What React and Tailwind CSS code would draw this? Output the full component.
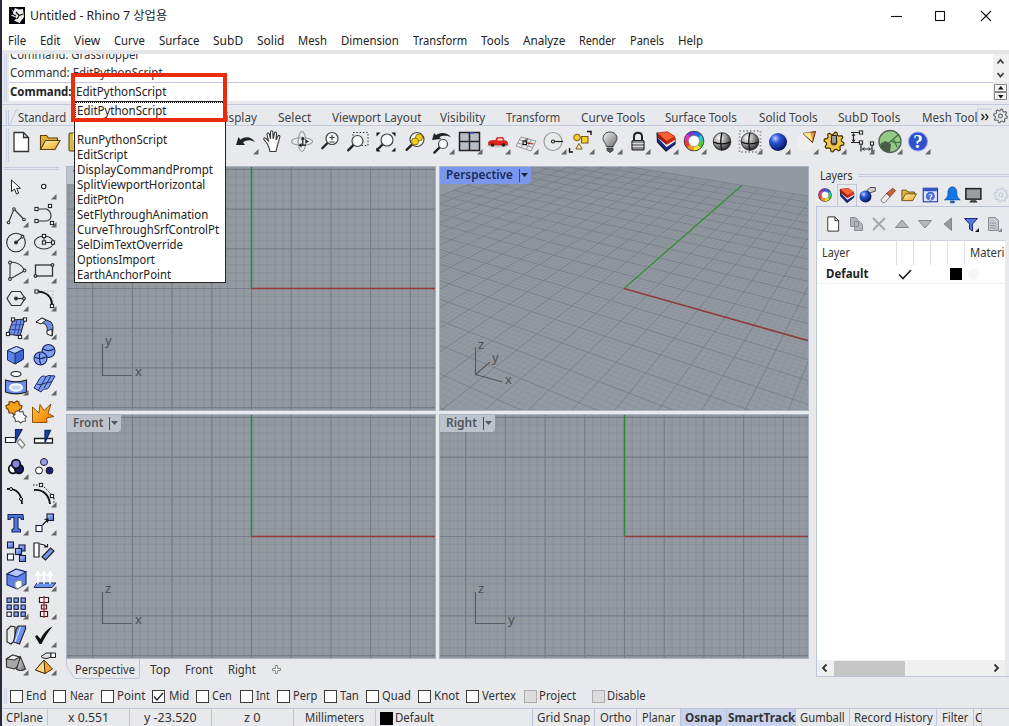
import React, { useLayoutEffect, useRef } from "react";

/* Text condensed horizontally to the width of its box. */
function T({ className = "", children }) {
  const box = useRef(null);
  const ink = useRef(null);
  useLayoutEffect(() => {
    const natural = ink.current.offsetWidth;
    if (natural) ink.current.style.transform = `scaleX(${box.current.offsetWidth / natural})`;
  }, []);
  return (
    <span ref={box} className={`inline-block shrink-0 whitespace-pre ${className}`}>
      <span ref={ink} className="inline-block origin-left">{children}</span>
    </span>
  );
}

const BL = "#6f8fe6";
const K = "#1b1b1b";

const Defs = () => (
  <svg className="absolute h-0 w-0">
    <defs>
      <radialGradient id="chrome" cx="35%" cy="30%" r="75%">
        <stop offset="0" stopColor="#fff" /><stop offset=".5" stopColor="#9a9a9a" /><stop offset="1" stopColor="#222" />
      </radialGradient>
      <radialGradient id="blueball" cx="35%" cy="30%" r="75%">
        <stop offset="0" stopColor="#b9d0ff" /><stop offset=".35" stopColor="#2a55d8" /><stop offset="1" stopColor="#04104f" />
      </radialGradient>
      <linearGradient id="gold" x1="0" y1="0" x2="1" y2="1">
        <stop offset="0" stopColor="#fff3b8" /><stop offset="1" stopColor="#e8a818" />
      </linearGradient>
      <linearGradient id="flame" x1="0" y1="0" x2="1" y2="1">
        <stop offset="0" stopColor="#ffc93a" /><stop offset="1" stopColor="#ee7505" />
      </linearGradient>
      <linearGradient id="blu" x1="0" y1="0" x2="1" y2="1">
        <stop offset="0" stopColor="#c3d3ff" /><stop offset="1" stopColor="#3f64d4" />
      </linearGradient>
      <linearGradient id="grayg" x1="0" y1="0" x2="1" y2="1">
        <stop offset="0" stopColor="#f4f4f4" /><stop offset="1" stopColor="#6a6a6a" />
      </linearGradient>
    </defs>
  </svg>
);

const Dot = ({ x, y }) => <rect x={x - 1.6} y={y - 1.6} width="3.2" height="3.2" fill="#fff" stroke={K} strokeWidth="1" />;
const Page = () => <path d="M7 4.500h9.500l5 5V23.500H7zM16.500 4.500v5h5" fill="#fff" stroke="#333" strokeWidth="1.3" />;
const Folder = () => (
  <g stroke="#5b4208" strokeWidth="1.1">
    <path d="M4.500 21V7.500h6l2 2.500h9V13" fill="#e0b23c" />
    <path d="M4.500 21.500l5-9h14.500l-5 9z" fill="url(#gold)" />
  </g>
);
const Wheel = ({ r = 7.5, w = 4 }) => {
  const cols = ["#27c4c4", "#2b62e0", "#7a35d8", "#e034b4", "#f3372d", "#f59a1c", "#f2e52a", "#52c936"].reverse();
  const c = 2 * Math.PI * r;
  return (
    <g fill="none" strokeWidth={w}>
      <circle cx="14" cy="14" r={r} stroke="#333" strokeWidth={w + 1.6} />
      {cols.map((k, i) => (
        <circle key={k} cx="14" cy="14" r={r} stroke={k} strokeDasharray={`${c / 8 + 0.3} ${c}`} strokeDashoffset={(-c * i) / 8} />
      ))}
      <circle cx="14" cy="14" r={r - w / 2} fill="#fff" stroke="#888" strokeWidth=".5" />
    </g>
  );
};
const LayersIcon = () => (
  <g strokeLinejoin="round">
    <path d="M5 5l9.500 8.500L23 10.500v5.500l-9 7L5.500 14z" fill="#1b2d86" stroke="#161c46" strokeWidth="1.200" />
    <path d="M5.500 9.500l9 9.500 8.500-5.500v-2.500L14.500 16z" fill="#f4f5fb" />
    <path d="M5 5l9.500 8.500v3.500L5.500 9z" fill="#a81a0c" />
    <path d="M14.500 13.500l8.500-5v3.500l-8.500 5z" fill="#d8260f" />
    <path d="M5 5l10.500-1.200L23 8.500l-8.500 5z" fill="#ff6230" stroke="#8c1c0a" strokeWidth=".7" />
  </g>
);
const Lens = ({ x = 16, y = 11, r = 6, fill = "#f7f8fa" }) => (
  <g>
    <path d={`M${x - r * 0.7} ${y + r * 0.7}L${x - r * 0.7 - 5.5} ${y + r * 0.7 + 5.5}`} stroke="#222" strokeWidth="2.300" strokeLinecap="round" />
    <circle cx={x} cy={y} r={r} fill={fill} stroke="#444" strokeWidth="1.200" />
  </g>
);
const Gear = ({ fill = "none", stroke = "#777", r = 6.5, w = 1.1 }) => {
  const pts = [];
  for (let i = 0; i < 32; i++) {
    const rad = i % 4 < 2 ? r * 1.25 : r * 0.95;
    const a = (i / 32) * 2 * Math.PI + 0.1;
    pts.push(`${(14 + rad * Math.cos(a)).toFixed(2)},${(14 + rad * Math.sin(a)).toFixed(2)}`);
  }
  return (
    <g fill={fill} stroke={stroke} strokeWidth={w}>
      <polygon points={pts.join(" ")} />
      <circle cx="14" cy="14" r={r * 0.35} fill="#e7e9ed" />
    </g>
  );
};
const Chrome = () => (
  <g>
    <circle cx="14" cy="13.500" r="8.800" fill="url(#chrome)" stroke="#222" strokeWidth=".8" />
    <path d="M5.500 14c4 2.500 13 2.500 17 0M14 5c-1.500 5-1.500 12 0 17" fill="none" stroke="#111" strokeWidth="1.300" />
  </g>
);

const top = {
  new: <g transform="translate(-1 0)"><Page /></g>,
  open: <Folder />,
  save: <g><rect x="5" y="5" width="18" height="18" rx="1" fill="#d9b84a" stroke="#4a3b0d" /><rect x="9" y="5" width="10" height="7" fill="#fff" /></g>,
  undo: <path d="M4 17l2.500-8 2 2.800c5-4 11-3 14.500 2.200-5-2.500-9-2-12 .5l2 2.500z" fill="#222" />,
  hand: <path d="M8.500 16L5 11.500c-1-1.500 1-2.500 2-1l2.500 2.500L8 6.500c0-2 2-2 2.500 0L11.500 11l0-7c.3-1.600 2-1.600 2.300 0l.4 7 1.300-6c.5-1.500 2.100-1.200 2.100.5L17 12l2-4c.7-1.300 2.200-.5 1.900.8L18.500 17c-.5 3-1 4-1.500 6.500h-6c-.5-3-1.500-5-2.500-7.500z" fill="#fff" stroke="#333" strokeWidth="1.1" transform="translate(-1 0)" />,
  rotate: (
    <g fill="none" stroke="#999" strokeWidth="1.100">
      <ellipse cx="14" cy="13.500" rx="10.500" ry="3.800" /><ellipse cx="14" cy="13.500" rx="3.800" ry="10" />
      <path d="M13 17.200h5M14.800 11v6" stroke="#222" strokeWidth="1.200" />
      <path d="M10.500 17.200l3-2.200v4.400zM21 13.500l-3.500-2v4zM14.800 8.500l-2 3.200h4z" fill="#222" stroke="none" />
    </g>
  ),
  zoom: <g transform="translate(1 0)"><Lens x={15} y={10.500} /><path d="M12.500 9.500h5M15 7v5M12.500 14h5" stroke="#333" strokeWidth="1.100" /></g>,
  zoomwin: <g><path d="M9 4.500h15v13H9z" fill="none" stroke="#333" strokeDasharray="1.5 1.8" /><Lens x={13.500} y={13} r={5.500} /></g>,
  zoomext: <g><Lens x={15} y={12} /><path d="M4.500 8.500v-4h4zM19.500 4.500h4v4zM23.500 19.500v4h-4zM4.500 19.500v4h4z" fill="#111" /></g>,
  zoomsel: <g transform="translate(1 0)"><Lens x={16} y={11.500} r={7} /><circle cx="18" cy="9.500" r="3.500" fill="#f2cf1d" stroke="#8b7100" /><circle cx="14" cy="13.500" r="3.500" fill="#f2cf1d" stroke="#8b7100" /></g>,
  zoomundo: <g><path d="M4 12l2-7 2 2c5-3.500 11-2.500 15 2-5-2-9-1.500-11.500 0l1.500 2z" fill="#222" /><Lens x={15} y={16} r={4.500} /></g>,
  views: <g fill="#b9bdc4" stroke="#222" strokeWidth="1.500"><path d="M3.500 4.500h20v18h-20zM13.500 4.500v18M3.500 13.500h20" /><path d="M14 5h4" stroke="#3a55d0" /></g>,
  car: <g><ellipse cx="14" cy="18" rx="11" ry="1.500" fill="#c5c7cc" /><path d="M4.500 14.500c0-1.500 2-2.300 7-2L13 9.500h6l1.300 3.200c2.200 0 3.200.8 3.200 2V17h-19z" fill="#e4211b" stroke="#b0140f" strokeWidth=".6" /><path d="M14 10.500h4.300l.8 2h-6z" fill="#f9dcd9" /><circle cx="8.500" cy="17" r="1.700" fill="#222" /><circle cx="19.500" cy="17" r="1.700" fill="#222" /></g>,
  cplane: <g fill="none" stroke="#999" strokeWidth="1"><path d="M9 9l15 4-5 10-15-5zM7.500 12l15 4M6 15l15 4.500M14 10l-5 10M19 12l-5 10" /><path d="M14 15v-4M14 15l7 1" stroke="#b02424" /><path d="M14 15l2-5" stroke="#2a8a2a" /><rect x="11" y="13" width="3.500" height="3.500" stroke="#111" /></g>,
  circle: <g fill="none" stroke="#999" strokeWidth="1.200"><circle cx="13" cy="13.500" r="9" /><path d="M13 13.500h10" stroke="#222" /><circle cx="13" cy="13.500" r="1.500" fill="#fff" stroke="#222" /></g>,
  selobj: <g stroke="#7a5a08" strokeWidth="1"><circle cx="9" cy="9.500" r="3.300" fill="#f6cf2c" /><rect x="13.500" y="8.500" width="6.500" height="6.500" fill="#f6cf2c" /><path d="M11 15.500l3.200 5.500H7.800z" fill="#fbe8c8" /><path d="M19 3.500h4v3.500M1.500 20v4h3.500" fill="none" stroke="#111" strokeWidth="1.400" /></g>,
  bulb: <g stroke="#444" strokeWidth="1"><path d="M14 4c-4.500 0-7 3-7 6.500 0 3 3 5 3.500 8h7c.5-3 3.500-5 3.500-8C21 7 18.500 4 14 4z" fill="url(#grayg)" /><path d="M11 20h6v2.500l-3 2-3-2z" fill="#555" /></g>,
  lock: <g><path d="M10 13V8.500c0-5 8-5 8 0V13" fill="none" stroke="#222" strokeWidth="2" /><rect x="8" y="12.500" width="12" height="9.500" rx="1" fill="#8c8c8c" stroke="#222" strokeWidth="1.200" /><path d="M8.500 15.500h11M8.500 18.500h11" stroke="#ddd" /></g>,
  layers: <LayersIcon />,
  wheel: <g transform="translate(0 -1)"><Wheel /></g>,
  shade: <Chrome />,
  shadesel: <g><rect x="3.500" y="3" width="21" height="21" fill="none" stroke="#999" strokeDasharray="1.500 2" strokeWidth="1.800" /><Chrome /></g>,
  render: <circle cx="14" cy="14" r="9" fill="url(#blueball)" />,
  cone: <g><circle cx="13" cy="14" r="9" fill="#efedef" /><path d="M11 5.500l12.500-2-3 11z" fill="#f0922e" stroke="#4a2a0a" strokeWidth="1" /><path d="M11 5.500l7.500-1.200 2 9z" fill="#ffe89a" /></g>,
  gears: <g><Gear fill="#efc64a" stroke="#453207" r={8} w={1.200} /><path d="M11.500 14V7.500h5V14c0 2-5 2-5 0z" fill="#999" stroke="#222" /></g>,
  dims: <g fill="none" stroke="#222" strokeWidth="1.200"><path d="M3 4.500h10M3 14.500h10v9M24 16v8M5.500 6v7M14.500 21h8" /><path d="M4 8l1.500-2.500L7 8M4 11.500L5.500 14 7 11.500M16.500 19.500l-2 1.500 2 1.500M20.500 19.500l2 1.500-2 1.500" strokeWidth=".9" /><Dot x={13} y={4.500} /><Dot x={13} y={14.500} /><Dot x={24} y={15.500} /></g>,
  gh: <g><circle cx="14" cy="13.500" r="11" fill="#95c986" stroke="#59685a" strokeWidth="1.500" /><path d="M4 17c4-5 7-2 9-2l9-8M14 13c5 2 7 2 10 1M18 12l3 7" fill="none" stroke="#3d6d42" strokeWidth="1.200" /><path d="M4 18l5-5 6 3-1 8c-4 1-8-2-10-6z" fill="#4a5c45" /></g>,
  help: <g><circle cx="14" cy="13.500" r="9.500" fill="#2e50cc" stroke="#8fa4ee" strokeWidth="1" /><text x="14" y="20" textAnchor="middle" fontFamily="Liberation Serif, serif" fontWeight="700" fontSize="19" fill="#fff">?</text></g>,
};

const topRow = [
  ["new"], ["open"], ["save"], null, null, null, null, null,
  ["undo", 1], ["hand"], ["rotate"], ["zoom"], ["zoomwin"], ["zoomext"], ["zoomsel"], ["zoomundo", 1], ["views", 1], ["car", 1],
  ["cplane", 1], ["circle", 1], ["selobj", 1], ["bulb", 1], ["lock", 1], ["layers", 1], ["wheel", 1], ["shade"], ["shadesel", 1],
  ["render", 1], ["cone", 1], ["gears", 1], ["dims", 1], ["gh", 1], ["help", 1],
];

const Sq = ({ x, y, s = 5.5, f = "url(#blu)" }) => <rect x={x} y={y} width={s} height={s} fill={f} stroke="#151c3c" strokeWidth="1.100" />;

const side = [
  <path d="M9.500 7v11.500l3-2.500 2 5 2.200-.9-2-4.800h3.800z" fill="#fff" stroke="#222" strokeWidth="1" />,
  <circle cx="13.700" cy="13.500" r="2.200" fill="#fff" stroke="#222" strokeWidth="1.100" />,
  <g fill="none" stroke="#333" strokeWidth="1.100"><path d="M6.500 21.500L12 8l10 10.500" /><circle cx="6.500" cy="21.500" r="1.300" fill="#fff" /><circle cx="12" cy="8" r="1.300" fill="#fff" /><circle cx="22" cy="18.500" r="1.300" fill="#fff" /></g>,
  <g fill="none" stroke="#333" strokeWidth="1.100"><path d="M6.500 8h10c6 3 6 11 0 12h-10" /><Dot x={6.500} y={8} /><Dot x={6.500} y={20} /><Dot x={20} y={5} /><Dot x={22} y={22} /></g>,
  <g fill="none" stroke="#333" strokeWidth="1.100"><circle cx="14" cy="13.500" r="9.300" /><path d="M14 13.500l6-5.500" /><circle cx="14" cy="13.500" r="1.400" fill="#222" /><circle cx="20.500" cy="7.500" r="1.400" fill="#fff" /></g>,
  <g fill="none" stroke="#333" strokeWidth="1.100"><ellipse cx="14" cy="13.500" rx="9.500" ry="6.500" /><path d="M14 7v6.500h9" /><Dot x={14} y={7} /><Dot x={14} y={13.500} /><Dot x={23} y={13.500} /></g>,
  <g fill="none" stroke="#333" strokeWidth="1.100"><path d="M8 5v17l15-8.500C20 8 14 5 8 5" /><circle cx="8" cy="5.500" r="1.400" fill="#fff" /><circle cx="8" cy="22" r="1.400" fill="#fff" /><circle cx="22.500" cy="13.500" r="1.400" fill="#fff" /></g>,
  <g fill="none" stroke="#333" strokeWidth="1.300"><rect x="5.500" y="8" width="17" height="11" /><circle cx="22.500" cy="8" r="1.300" fill="#fff" /><circle cx="5.500" cy="19" r="1.300" fill="#fff" /></g>,
  <g fill="none" stroke="#333" strokeWidth="1.200"><path d="M9.500 6.500h9l4.500 7-4.500 7h-9l-4.500-7z" /><path d="M14 13.500h8" /><circle cx="14" cy="13.500" r="1.300" fill="#222" /><circle cx="22" cy="13.500" r="1.300" fill="#fff" /></g>,
  <g fill="none" stroke="#111"><path d="M8 6h15v15" stroke="#aaa" strokeDasharray="1.500 1.500" /><path d="M6 6.500c10 0 16 5 16 14" strokeWidth="2" /><Dot x={6.500} y={6.500} /><Dot x={22} y={21} /></g>,
  <g><path d="M11 7l12-1-5 17L6 21z" fill={BL} stroke="#222" /><path d="M9.500 12l12-.5M8 16.500l12 .5M15 7l-3 15M19 7l-3.500 15" stroke="#2b3f9a" strokeWidth=".9" /><Dot x={11} y={6.500} /><Dot x={23} y={6.500} /><Dot x={6} y={21} /><Dot x={18} y={24} /></g>,
  <g stroke="#222" strokeWidth="1"><path d="M6 9l6-4 9 4c3 4 2 8 1 14l-5-4c1-5-1-8-4-9z" fill={BL} /><path d="M6 9l6-4 4 2-5 4zM17 18l5-2v7l-5-2z" fill="#fff" /></g>,
  <g stroke="#1c2b66" strokeWidth="1"><path d="M5.500 9.500l9-4 7 3v9.500l-8.500 5-7.500-4z" fill="#5f86ea" /><path d="M5.500 9.500l9-4 7 3-8.500 4z" fill="#bccfff" /><path d="M13 12.500l8.500-4v9.500l-8.500 5z" fill="#3c63d2" /></g>,
  <g stroke="#15235e" strokeWidth="1.100"><circle cx="18.500" cy="10" r="6.500" fill="#7f9ff2" /><circle cx="10.500" cy="17.500" r="6.500" fill="#7f9ff2" /><path d="M13 8c4 2 8 2 11 0M4.500 16c4 2 8 2 11 0M10 11.500c-1 4-1 8 1 12" fill="none" /></g>,
  <g stroke="#222" strokeWidth="1.100"><ellipse cx="14" cy="5" rx="5" ry="2.500" fill="#fff" /><path d="M3.500 11v12c6 2.500 15 2.500 21 0V11c-6 2.500-15 2.500-21 0z" fill="#6c8fee" /><ellipse cx="14" cy="18.500" rx="6" ry="3.300" fill="#c8d6ff" stroke="#fff" strokeWidth="2" /></g>,
  <g stroke="#1d2b66" strokeWidth="1"><path d="M4 19L10 9c3-4 6 0 8-2.500L25 7l-6 11c-2 4-5 0-8 5z" fill="#7d9df2" /><path d="M8.500 21l8-14M14 19l7-12M7 15c4 2 8-2 15-2" fill="none" /></g>,
  <g strokeWidth="1.100"><path d="M4 8.500l3-1V5l3-.5L12 6l3-2 2 1v2.500l3 1.500-1 3-1.500.5 0 2.500-3.500 1-2 2-2-2-3 0-.5-3-2-1.500z" fill="#f7a11b" stroke="#6b3a00" /><path d="M13 15l3-1.500 2 1.500 3-.5.5 3 3 2-1.500 2 .5 2.500-3 .5-2 1.500-2-2-3 .5-.5-3-2-2 2-2z" fill="#fff" stroke="#555" /></g>,
  <path d="M2.500 10l6.500 6 1-8.500 4 6L21 7l-3 9.500 6 3-7.500 1.500.5 4.500H2.500z" fill="url(#flame)" stroke="#8a4300" strokeWidth=".9" />,
  <g stroke="#222" strokeWidth="1.200"><path d="M3.500 12.500h10v5h-10z" fill="#fff" /><path d="M13.500 4.500h6.500l-6.500 12z" fill="#1d3f9c" stroke="#12286a" /><path d="M15 17l3-3 5 6-3 3z" fill="#f4f4f4" stroke="#888" /></g>,
  <g stroke="#222" strokeWidth="1.300"><path d="M4.500 13.500h18v4.500h-18z" fill="#fff" /><path d="M15 5.500h5.500l-5.500 12z" fill="#1d3f9c" stroke="#12286a" /></g>,
  <g stroke="#0b0b1c" strokeWidth="1.700"><circle cx="11" cy="16" r="4.300" fill="#fff" /><circle cx="17" cy="16" r="4.300" fill="#1c1c66" /><circle cx="14" cy="11" r="4.300" fill="#8686d8" /></g>,
  <g stroke="#222" strokeWidth="1"><circle cx="14" cy="9" r="3.500" fill="#9b9bee" /><circle cx="9" cy="17.500" r="3.500" fill="#fff" /><circle cx="19.500" cy="17.500" r="3.500" fill="#1c1c7a" /></g>,
  <g fill="none" stroke="#111"><path d="M5 8c9-1 15 5 15 15" strokeWidth="1.800" /><circle cx="9" cy="8" r="1.500" fill="#fff" /><circle cx="19" cy="18" r="1.500" fill="#fff" /></g>,
  <g fill="none" stroke="#111"><path d="M4 9c9-1 15 5 16 14" strokeWidth="1.900" /><path d="M3 4h9l12 12v6" strokeDasharray="1.500 1.500" /><Dot x={11} y={4} /><Dot x={22} y={15} /></g>,
  <path d="M6 5.500h15l.5 5h-2l-1-2h-2.500v11l2.500 1v2.500H10V20.500l2-1v-11H9l-1 2H6z" fill="#4f76dc" stroke="#16275f" strokeWidth="1.100" strokeLinejoin="round" />,
  <g><Sq x={17} y={5} s={6.500} /><Sq x={6} y={16.500} s={6} f="#fff" /><path d="M12.500 16l5-5M14.500 10.500l3.500-.5-.5 3.500" fill="none" stroke="#111" strokeWidth="1.100" /></g>,
  <g><Sq x={5.500} y={5} s={6} /><Sq x={17} y={8} s={6} /><Sq x={13.500} y={11.500} s={6} /><Sq x={5.500} y={17} s={6} f="#fff" /><Sq x={17.500} y={18.500} s={6} /></g>,
  <g stroke="#222" strokeWidth="1.200"><path d="M4 6h5v14H4z" fill="#fff" /><path d="M12 20L20.500 11l3.500 3-8.500 9z" fill="#7295ef" /><path d="M10 7c3 0 5 1 7 3M14 10h3.500V7" fill="none" /></g>,
  <g stroke="#182a6b" strokeWidth="1.100"><path d="M5 9l9-5 10 3v12l-9 5-10-4z" fill="#5b80e6" /><path d="M5 9l9-5 10 3-9 5z" fill="#b4c8ff" /><path d="M13 17l4-2 3 1v5l-4 3-3-2z" fill="#fff" stroke="#888" /></g>,
  <g><path d="M4 22.500l3-4.500h19l-4 4.500z" fill="#6f92ec" stroke="#1b2b66" strokeWidth="1" /><path d="M8 19V9M14 19V9M20 19V9M6 10l2-3.500 2 3.500zM12 10l2-3.500 2 3.500zM18 10l2-3.500 2 3.500z" fill="#fff" stroke="#fff" strokeWidth="1.500" /></g>,
  <g>{[5, 12, 19].map((x) => [5, 12, 19].map((y) => <Sq key={x + "-" + y} x={x} y={y} s={4.300} f={x === 5 && y === 19 ? "#fff" : "#86a2ee"} />))}</g>,
  <g fill="none" stroke="#222" strokeWidth="1.200"><path d="M9.500 4.500h9v5h-9zM11.500 12h5v4h-5zM10.500 18.500h7v5h-7z" fill="#fff" /><path d="M14 3v22" stroke="#d11" strokeWidth="1.300" /></g>,
  <g stroke="#222" strokeWidth="1.100"><path d="M5 9l4-4 4 1v13l-4 4-4-2z" fill="#e8e8e8" /><path d="M14.500 7l2-2h7v3l-6 15-6-2z" fill="#6d91ee" /><path d="M13 21l5.500-15" stroke="#dfe7ff" /></g>,
  <path d="M5 15.500l2-1.500 3.500 4C13 13 17 8 22.500 5.500 18 11 14.500 17 11.500 23H9.500z" fill="#111" />,
  <g stroke="#333" strokeWidth="1.100"><path d="M4.500 10l6-4 7 2v8l-5 4-8-2z" fill="#a8a8a8" /><path d="M4.500 10l6-4 7 2-5 3z" fill="#eee" /><path d="M18.500 8l5 12c-3 2-7 2-9 0z" fill="url(#grayg)" /></g>,
  <g stroke="#4a2e04" strokeWidth="1"><path d="M14 11l8.500 9-7.500 4.500L5.500 21z" fill="#f0a93a" /><path d="M14 11l1 13.500L5.500 21z" fill="#ffd98a" /><path d="M11 7.500l5-3.500h5v4l-4 1.500-4-.5z" fill="#ddd" stroke="#222" /><path d="M21 4h4.500v4.500H21z" fill="#fff" stroke="#222" /></g>,
];
const plain = [0, 16, 17, 18, 19, 21, 22, 26, 27];

const Flyout = () => <path d="M26.500 21v5.500H21z" fill="#666" />;

/* Floor plane as seen through the perspective camera, 70 units each way. */
const project = (x, y) => {
  const wx = (-0.3156 * x) / 70;
  const wy = (0.554 * y) / 70;
  const d = 1 + wx + wy;
  return `${((185 + wx * -838 + wy * 516) / d).toFixed(1)} ${((122.5 + wx * -167 + wy * -167) / d).toFixed(1)}`;
};
const persp = (major) => {
  let d = "";
  for (let i = -70; i <= 70; i++) {
    if ((i % 5 === 0) !== major) continue;
    d += `M${project(i, -70)}L${project(i, 70)}M${project(-70, i)}L${project(70, i)}`;
  }
  return d;
};
const ortho = (major) => {
  let d = "";
  for (let i = -24; i <= 24; i++) {
    if ((i % 5 === 0) !== major) continue;
    d += `M${(185.5 + i * 7.94).toFixed(1)} 0V246M0 ${(122.5 + i * 7.94).toFixed(1)}H372`;
  }
  return d;
};

function Viewport({ name, tw, active, axes }) {
  const p = name === "Perspective";
  return (
    <div className="relative h-[245px] w-[370px] shrink-0 overflow-hidden bg-[#9299a0]">
      <svg width="370" height="245" className="block" fill="none">
        <path d={p ? persp(false) : ortho(false)} stroke={p ? "#848b94" : "#888f98"} strokeWidth={p ? 0.4 : 0.9} />
        <path d={p ? persp(true) : ortho(true)} stroke="#757c85" strokeWidth={p ? 0.8 : 1.1} />
        {p ? (
          <g strokeWidth="1.600"><path d={`M${project(0, 0)}L${project(0, 70)}`} stroke="#3f8f43" /><path d={`M${project(0, 0)}L${project(70, 0)}`} stroke="#8e3d3c" /></g>
        ) : (
          <g strokeWidth="1.600"><path d="M185.500 122V0" stroke="#35883a" /><path d="M185.500 122.500H371" stroke="#8e3a3a" /></g>
        )}
        <path d={p ? "M36.500 181v27.500l27 7.500M36.500 208.500L51 196" : "M36.500 178v31.500H66"} stroke="#55595e" strokeWidth="1.100" />
        <g fill="#4c5056" fontFamily="Noto Sans, sans-serif" fontSize="13">
          {p ? (
            <><text x="39" y="183">z</text><text x="53" y="196">y</text><text x="66" y="218">x</text></>
          ) : (
            <><text x="39" y="179">{axes[1]}</text><text x="69" y="210">{axes[0]}</text></>
          )}
        </g>
      </svg>
      <div className={`absolute left-0 top-0 flex h-[18px] items-center rounded-br pl-[7px] font-semibold ${active ? "bg-[#7b97ec] text-[#1b2c55]" : "bg-[#bcc3cb] text-[#50555c]"}`}>
        <T className={tw}>{name}</T>
        <span className="ml-[6px] h-[13px] w-px bg-[#444b58]" />
        <svg width="11" height="6"><path d="M1 1h7L4.500 5z" fill={active ? "#1b2230" : "#50555c"} /></svg>
      </div>
      <div className="pointer-events-none absolute inset-0 border border-[#a9b3c6]" />
    </div>
  );
}

const Check = ({ on, off, children }) => (
  <>
    <span className={`flex h-[13px] w-[13px] shrink-0 items-center justify-center border ${off ? "border-[#adadad] bg-[#dcdcdc]" : "border-[#3b3b3b] bg-white"}`}>
      {on && <svg width="11" height="11" fill="none"><path d="M1 5.500l3 3.500L10 2" stroke="#222" strokeWidth="1.300" /></svg>}
    </span>
    {children}
  </>
);

const Cell = ({ children, className }) => (
  <div className={`flex h-full shrink-0 items-center justify-center border-r border-[#bcc5da] ${className}`}>{children}</div>
);

const PIcon = ({ children, s = 18 }) => <svg width={s} height={s} viewBox="2 2 24 24" className="shrink-0">{children}</svg>;

export default function App() {
  return (
    <div className="relative flex h-[726px] w-[1009px] flex-col overflow-hidden border-l-2 border-[#2b2a38] bg-[#e7e9ed] font-['Noto_Sans','Noto_Sans_CJK_KR',sans-serif] text-[12px] leading-[16px] text-[#333]">
      <Defs />
      <header className="flex h-[31px] shrink-0 items-center bg-white pl-[7px] text-[#222]">
        <svg width="16" height="17"><rect width="16" height="17" fill="#050505" /><path d="M2 1.500l2.500 3L6 1l4 1.500L14 2l1 8-4.500 6L5 13.500 8 11 2 8.500 4.500 6z" fill="#ececec" /><path d="M7 5l3 3.500L14 7M3 7l4 2M10 9l-2 3" fill="none" stroke="#111" strokeWidth="1.200" /></svg>
        <T className="ml-[5px] w-[137px]">Untitled - Rhino 7 상업용</T>
        <svg width="120" height="16" className="ml-auto mr-[2px]" fill="none" stroke="#111" strokeWidth="1.100"><path d="M4 8.500h11" /><rect x="48.500" y="3.500" width="9" height="9" /><path d="M94 3l10 10M104 3L94 13" /></svg>
      </header>
      <nav className="flex h-[19px] shrink-0 items-center gap-[14px] bg-white pl-[6px] text-[#222]">
        <T className="w-[18px]">File</T><T className="w-[20px]">Edit</T><T className="w-[26px]">View</T><T className="w-[31px]">Curve</T>
        <T className="w-[40px]">Surface</T><T className="w-[30px]">SubD</T><T className="w-[27px]">Solid</T><T className="w-[29px]">Mesh</T>
        <T className="w-[58px]">Dimension</T><T className="w-[54px]">Transform</T><T className="w-[28px]">Tools</T><T className="w-[42px]">Analyze</T>
        <T className="w-[37px]">Render</T><T className="w-[34px]">Panels</T><T className="w-[25px]">Help</T>
      </nav>

      <section className="flex h-[54px] shrink-0 items-start border-t-4 border-[#e4e5e9]">
        <div className="mx-[2px] h-[48px] w-[3px] border-x border-[#cdd2e2]" />
        <div className="flex h-[47px] w-[985px] flex-col bg-white">
          <div className="flex h-[28px] shrink-0 flex-col justify-end overflow-hidden pl-px leading-[18px]">
            <T className="w-[130px]">Command: Grasshopper</T>
            <T className="w-[153px]">Command: EditPythonScript</T>
          </div>
          <div className="flex h-[19px] items-center border-t border-[#c3c7e0] pl-px text-[#222]">
            <T className="w-[62px] font-bold">Command:</T>
            <T className="ml-1 w-[90px]">EditPythonScript</T>
          </div>
        </div>
        <svg width="16" height="48" fill="none"><rect width="16" height="28" fill="#f0f0f0" /><path d="M4.500 9.500l3-3.500 3 3.500M4.500 19l3 3.500 3-3.500" stroke="#444" strokeWidth="1.800" /><path d="M1.500 30.500h12v7h-12zM1.500 38.500h12v7h-12z" fill="#f3f3f3" stroke="#888" /><path d="M5 35.500h5.500L7.800 32zM5 41h5.500l-2.700 3.500z" fill="#111" /></svg>
      </section>

      <section className="flex h-[22px] shrink-0 items-center border-b border-t border-[#c3cadb] pl-[4px] text-[#444]">
        <svg width="12" height="20" className="shrink-0"><path d="M.5 20V5M2.500 20V5M4 20L10 5h2" fill="none" stroke="#c3cadb" /></svg>
        <div className="flex w-[959px] shrink-0 items-center overflow-hidden pt-[5px]">
          <T className="w-[48px]">Standard</T><T className="ml-[151px] w-[40px]">Display</T><T className="ml-[21px] w-[33px]">Select</T>
          <T className="ml-[21px] w-[89px]">Viewport Layout</T><T className="ml-[19px] w-[45px]">Visibility</T><T className="ml-[21px] w-[54px]">Transform</T>
          <T className="ml-[21px] w-[64px]">Curve Tools</T><T className="ml-[20px] w-[72px]">Surface Tools</T><T className="ml-[22px] w-[59px]">Solid Tools</T>
          <T className="ml-[20px] w-[62px]">SubD Tools</T><T className="ml-[22px] w-[61px]">Mesh Tools</T>
        </div>
        <svg width="32" height="20" fill="none" className="shrink-0"><path d="M.5 20V4H15" stroke="#c3cadb" /><path d="M4.500 9l2.500 3-2.500 3M8.500 9l2.500 3-2.500 3" stroke="#222" strokeWidth="1.300" /><g transform="translate(9.500 -3)"><Gear r={5.500} stroke="#666" /></g></svg>
      </section>

      <section className="flex h-[40px] shrink-0 items-start pl-[4px] pt-[2px]">
        <span className="mr-[-1px] h-[34px] w-[3px] border-x border-[#cdd2e2]" />
        {topRow.map((b, i) => (
          <svg key={i} width="28" height="28" viewBox="0 0 28 28" className="shrink-0">{b && top[b[0]]}{b && b[1] && <Flyout />}</svg>
        ))}
      </section>

      <main className="flex h-[516px] shrink-0">
        <aside className="w-[64px] shrink-0 pt-px">
          <div className="mb-[3px] ml-[2px] h-[3px] w-[55px] border-y border-[#c5cddf]" />
          <div className="grid w-[56px] grid-cols-2">
            {side.map((g, i) => (
              <svg key={i} width="28" height="28" viewBox="0 0 28 28">{g}{!plain.includes(i) && <Flyout />}</svg>
            ))}
          </div>
        </aside>
        <div className="flex w-[743px] shrink-0 flex-col">
          <div className="grid grid-cols-[370px_370px] gap-[3px]">
            <Viewport name="Top" tw="w-[22px]" axes="xy" />
            <Viewport name="Perspective" tw="w-[67px]" active />
            <Viewport name="Front" tw="w-[30px]" axes="xz" />
            <Viewport name="Right" tw="w-[31px]" axes="yz" />
          </div>
          <div className="flex h-[21px] items-center">
            <div className="relative flex h-[21px] w-[74px] items-center pl-[9px]">
              <svg width="74" height="21" className="absolute left-0 top-0" fill="none"><path d="M.500 0v7l8 12.500h63q2 0 2-2V0" stroke="#bcc5da" /></svg>
              <T className="w-[60px]">Perspective</T>
            </div>
            <T className="ml-[10px] w-[20px]">Top</T><T className="ml-[15px] w-[28px]">Front</T><T className="ml-[15px] w-[28px]">Right</T>
            <svg width="10" height="10" className="ml-[16px]"><path d="M3.500.5h2v3h3v2h-3v3h-2v-3h-3v-2h3z" fill="#fff" stroke="#888" /></svg>
          </div>
        </div>
        <aside className="flex min-w-0 flex-1 flex-col pl-[7px]">
          <div className="flex h-[18px] items-center pl-1 pt-px"><T className="w-[33px]">Layers</T><span className="ml-[5px] h-[3px] flex-1 border-y border-[#c5cddf]" /></div>
          <div className="flex h-[22px] items-center">
            <PIcon><Wheel r={6.500} w={3.500} /></PIcon>
            <span className="ml-[3px] mr-[1px] flex h-full w-[20px] shrink-0 items-center justify-center border border-b-0 border-[#bcc5da]"><PIcon><LayersIcon /></PIcon></span>
            <PIcon><circle cx="12" cy="16" r="8" fill="url(#blueball)" /><path d="M14 8l4-4h7v5l-7 2z" fill="#ccc" stroke="#222" /></PIcon>
            <span className="w-[3px] shrink-0" />
            <PIcon><path d="M5 20l7-8 5 4-7 8c-2 1-6-1-5-4z" fill="#eee" stroke="#555" /><path d="M12 12l8-7 4 3-7 8z" fill="#d2603a" stroke="#7a2a12" /></PIcon>
            <span className="w-[3px] shrink-0" />
            <PIcon><Folder /></PIcon>
            <span className="w-[3px] shrink-0" />
            <PIcon><rect x="5" y="5" width="19" height="18" fill="#dfe5ff" stroke="#2442a0" strokeWidth="1.500" /><path d="M5 5h19v4H5z" fill="#3455c4" /><circle cx="14.500" cy="15.500" r="6" fill="#4d6cd8" /><text x="14.500" y="20" textAnchor="middle" fontFamily="Liberation Serif, serif" fontWeight="700" fontSize="12" fill="#fff">?</text></PIcon>
            <span className="w-[4px] shrink-0" />
            <PIcon><path d="M14.500 3c-5 1-6 4-6 9 0 4-1.500 6-4.500 8.500h21c-3-2.500-4.500-4.500-4.500-8.500 0-5-1-8-6-9zM12 22h5v2.500h-5z" fill="#1277e6" stroke="#0d458c" strokeWidth=".8" /></PIcon>
            <span className="w-[3px] shrink-0" />
            <PIcon><rect x="4.500" y="5.500" width="20" height="14" fill="#9b9d9e" stroke="#222" strokeWidth="2" /><path d="M9 24h11l-2-3h-7z" fill="#333" /></PIcon>
            <span className="w-[10px] shrink-0" />
            <PIcon><Gear stroke="#c3cbd8" r={7.500} w={1.400} /></PIcon>
          </div>
          <div className="flex h-[471px] flex-col border border-r-0 border-[#bcc5da]">
            <div className="flex h-[33px] shrink-0 items-center gap-[5px] overflow-hidden pl-[7px]">
              <PIcon><Page /></PIcon>
              <svg width="18" height="18" viewBox="0 0 18 18" className="shrink-0" fill="#b2b4b8" stroke="#8c8f94"><path d="M3.500 2.500h5l3 3v6h-8zM7.500 6.500h5l3 3v6h-8z" /></svg>
              <svg width="18" height="18" className="shrink-0"><path d="M3 3l12 12M15 3L3 15" stroke="#a8a9ad" strokeWidth="2.200" /></svg>
              <svg width="18" height="18" className="shrink-0"><path d="M2.500 12.500L9 5l6.500 7.500z" fill="#b5b7ba" stroke="#888" /></svg>
              <svg width="18" height="18" className="shrink-0"><path d="M2.500 5.500L9 13l6.500-7.500z" fill="#b5b7ba" stroke="#888" /></svg>
              <svg width="18" height="18" className="shrink-0"><path d="M12.500 3v12.500L5 9z" fill="#97999c" stroke="#888" /></svg>
              <svg width="18" height="18" className="shrink-0"><path d="M2.500 3.500h13l-5 5.500v7l-3-2V9z" fill="#5376e0" stroke="#1b2d7c" /><path d="M17 13v4h-4z" fill="#111" /></svg>
              <svg width="18" height="18" className="shrink-0"><path d="M3.500 2.500h7l3 3v10h-10z" fill="#c6c8cb" stroke="#8b8e92" /><path d="M5 8h6M5 10.500h6M5 13h6" stroke="#9a9da1" /><path d="M17 13v4h-4z" fill="#888" /></svg>
            </div>
            <div className="mr-[4px] flex h-[420px] flex-col border-t border-[#ccd2e0] bg-white">
              <div className="flex h-[24px] shrink-0 items-center overflow-hidden pl-[5px]">
                <T className="w-[28px]">Layer</T>
                <span className="ml-[46px] grid h-full w-[69px] shrink-0 grid-cols-4 border-l border-[#dcdfea]">
                  <i className="border-r border-[#dcdfea]" /><i className="border-r border-[#dcdfea]" /><i className="border-r border-[#dcdfea]" /><i className="border-r border-[#dcdfea]" />
                </span>
                <T className="ml-[5px] w-[44px]">Material</T>
              </div>
              <div className="flex h-[19px] shrink-0 items-center border-b border-[#eceef3] pl-[9px] text-[#222]">
                <T className="w-[42px] font-bold">Default</T>
                <svg width="14" height="11" className="ml-[30px]" fill="none"><path d="M1 5.500l4 4L13 1" stroke="#222" strokeWidth="1.600" /></svg>
                <span className="ml-[38px] h-[12px] w-[12px] bg-black" />
                <span className="ml-[6px] h-[12px] w-[12px] rounded-full bg-[#f7f7f7]" />
              </div>
            </div>
            <div className="mr-[4px] flex h-[16px] shrink-0 items-center bg-[#f0f0f0]">
              <svg width="17" height="16" fill="none"><path d="M9.500 4.500L6 8l3.500 3.500" stroke="#333" strokeWidth="1.800" /></svg>
              <span className="h-[15px] w-[71px] bg-[#c6c6c6]" />
              <svg width="17" height="16" className="ml-auto" fill="none"><path d="M6.500 4.500L10 8l-3.500 3.500" stroke="#333" strokeWidth="1.800" /></svg>
            </div>
          </div>
        </aside>
      </main>

      <section className="flex h-[26px] shrink-0 items-center pl-[2px] pt-[2px]">
        <span className="mr-[3px] h-[16px] w-[3px] border-x border-[#cdd2e2]" />
        <Check><T className="ml-[3px] mr-[7px] w-[20px]">End</T></Check>
        <Check><T className="ml-[4px] mr-[7px] w-[24px]">Near</T></Check>
        <Check><T className="ml-[3px] mr-[7px] w-[28px]">Point</T></Check>
        <Check on><T className="ml-[4px] mr-[7px] w-[20px]">Mid</T></Check>
        <Check><T className="ml-[3px] mr-[8px] w-[20px]">Cen</T></Check>
        <Check><T className="ml-[3px] mr-[7px] w-[14px]">Int</T></Check>
        <Check><T className="ml-[3px] mr-[7px] w-[24px]">Perp</T></Check>
        <Check><T className="ml-[3px] mr-[7px] w-[19px]">Tan</T></Check>
        <Check><T className="ml-[3px] mr-[7px] w-[29px]">Quad</T></Check>
        <Check><T className="ml-[3px] mr-[7px] w-[25px]">Knot</T></Check>
        <Check><T className="ml-[3px] mr-[8px] w-[34px]">Vertex</T></Check>
        <Check off><T className="ml-[2px] mr-[16px] w-[37px]">Project</T></Check>
        <Check off><T className="ml-[2px] w-[39px]">Disable</T></Check>
      </section>

      <footer className="flex h-[19px] shrink-0 items-center border-t border-[#bcc5da]">
        <Cell className="w-[46px]"><T className="w-[37px]">CPlane</T></Cell>
        <Cell className="w-[82px]"><T className="w-[41px]">x 0.551</T></Cell>
        <Cell className="w-[82px]"><T className="w-[53px]">y -23.520</T></Cell>
        <Cell className="w-[82px]"><T className="w-[17px]">z 0</T></Cell>
        <Cell className="w-[82px]"><T className="w-[59px]">Millimeters</T></Cell>
        <div className="flex h-full w-[157px] shrink-0 items-center border-r border-[#bcc5da] pl-[4px]"><span className="h-[13px] w-[13px] bg-black" /><T className="ml-[2px] w-[39px]">Default</T></div>
        <Cell className="w-[62px]"><T className="w-[53px]">Grid Snap</T></Cell>
        <Cell className="w-[42px]"><T className="w-[31px]">Ortho</T></Cell>
        <Cell className="w-[44px]"><T className="w-[33px]">Planar</T></Cell>
        <Cell className="w-[46px] bg-[#c9d2ec]"><T className="w-[37px] font-bold">Osnap</T></Cell>
        <Cell className="w-[69px] bg-[#c9d2ec]"><T className="w-[67px] font-bold">SmartTrack</T></Cell>
        <Cell className="w-[54px]"><T className="w-[45px]">Gumball</T></Cell>
        <Cell className="w-[87px]"><T className="w-[79px]">Record History</T></Cell>
        <Cell className="w-[37px]"><T className="w-[26px]">Filter</T></Cell>
        <div className="flex h-full w-[8px] shrink-0 items-center overflow-hidden border-r border-[#bcc5da] pl-px"><T className="w-[8px]">C</T></div>
      </footer>

      <div className="absolute left-[72px] top-[101px] flex h-[182px] w-[152px] flex-col border border-[#222] bg-white leading-[15px] text-[#222]">
        <div className="flex h-[17px] w-full shrink-0 items-center border border-dotted border-[#111] pl-px"><T className="w-[89px]">EditPythonScript</T></div>
        <div className="flex flex-col items-start pl-[2px] pt-[13px]">
          <T className="w-[90px]">RunPythonScript</T><T className="w-[51px]">EditScript</T><T className="w-[136px]">DisplayCommandPrompt</T>
          <T className="w-[128px]">SplitViewportHorizontal</T><T className="w-[47px]">EditPtOn</T><T className="w-[131px]">SetFlythroughAnimation</T>
          <T className="w-[142px]">CurveThroughSrfControlPt</T><T className="w-[106px]">SelDimTextOverride</T><T className="w-[78px]">OptionsImport</T><T className="w-[94px]">EarthAnchorPoint</T>
        </div>
      </div>
      <div className="absolute left-[69px] top-[73px] h-[49px] w-[156px] border-[4px] border-[#ec2b0c]" />
    </div>
  );
}
